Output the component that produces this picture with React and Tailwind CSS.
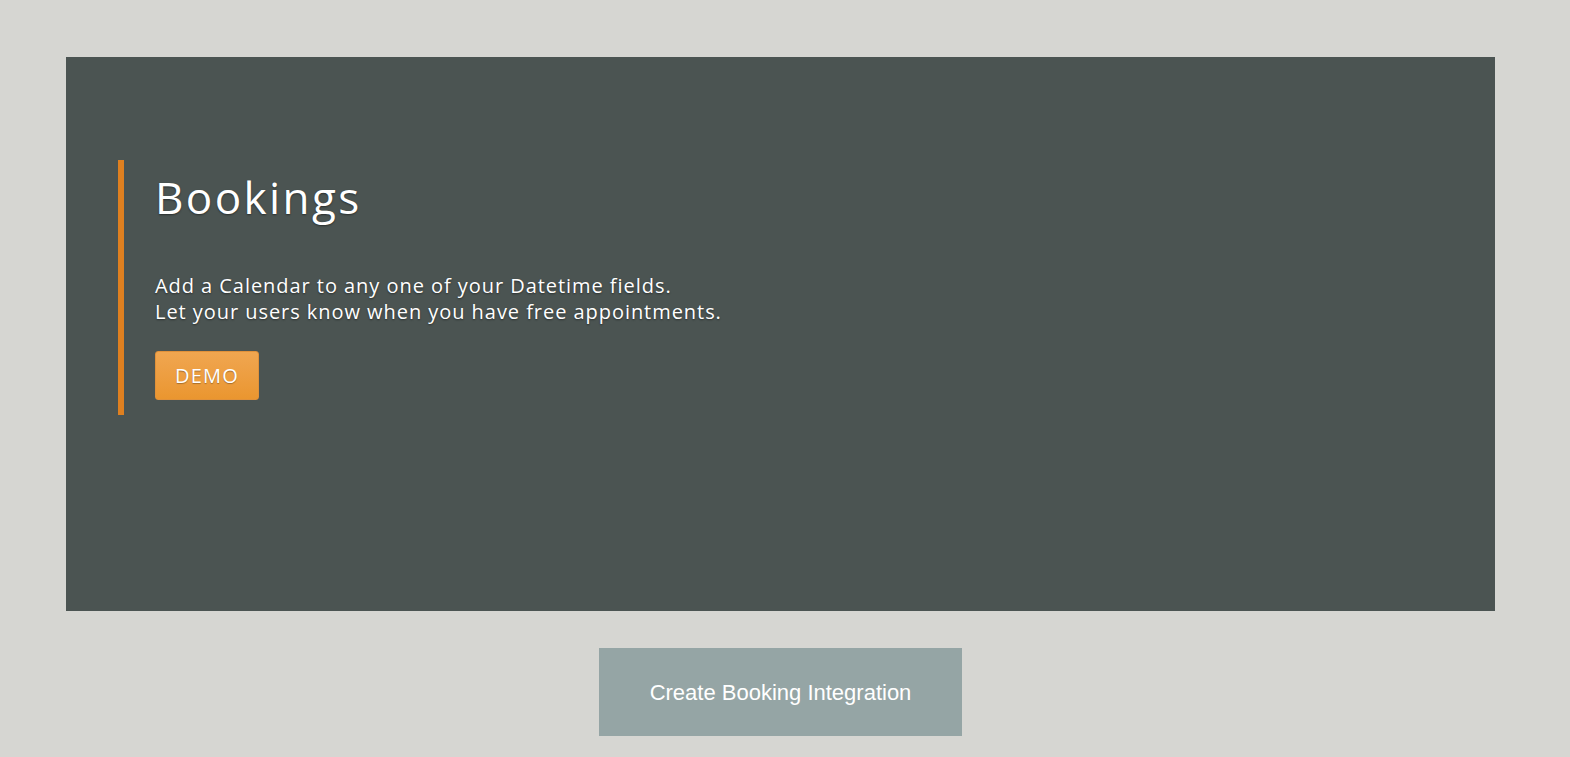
import React from "react";

export default function App() {
  return (
    <div className="min-h-screen bg-[#d6d6d2] pt-[57px] pb-[21px]" style={{ fontFamily: "'Open Sans', 'Noto Sans', sans-serif" }}>
      <div className="w-[1561px]">
        {/* hero panel */}
        <div className="mx-[66px] h-[554px] bg-[#4b5452] pt-[103px] pl-[52px]">
          <div className="flex border-l-[6px] border-[#df8020] pl-[31px] h-[255px]">
            <div className="text-white [text-shadow:0_1px_2px_rgba(0,0,0,0.45)]">
              <h1 className="text-[44px] leading-none mt-[15px] tracking-[2.4px]">Bookings</h1>
              <p className="mt-[54px] text-[20px] leading-[26px] tracking-[0.95px]">
                Add a Calendar to any one of your Datetime fields.
                <br />
                Let your users know when you have free appointments.
              </p>
              <button className="mt-[26px] w-[104px] h-[49px] rounded-[3px] bg-gradient-to-b from-[#f0a650] to-[#ea962f] border border-[#e0913a] text-white text-[20px] tracking-[1.2px] [text-shadow:0_1px_1px_rgba(0,0,0,0.3)]">
                DEMO
              </button>
            </div>
          </div>
        </div>

        {/* action */}
        <div className="flex justify-center mt-[37px]">
          <button
            className="w-[363px] h-[88px] bg-[#95a5a5] text-white text-[22px]"
            style={{ fontFamily: "'Liberation Sans', Arial, sans-serif" }}
          >
            Create Booking Integration
          </button>
        </div>
      </div>
    </div>
  );
}
